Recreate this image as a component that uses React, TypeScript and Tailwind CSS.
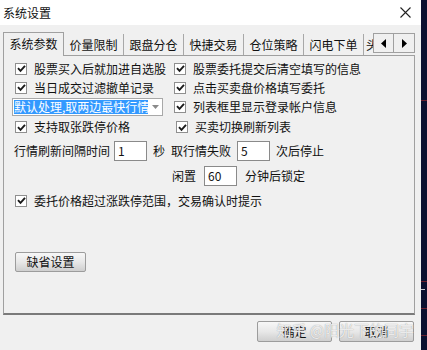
import React from 'react';

const font = { fontFamily: '"Noto Sans CJK SC", "Noto Sans", sans-serif' };

const Check = ({ className = '' }: { className?: string }) => (
    <span className={`w-[12px] h-[12px] border border-[#8f8f8f] bg-white flex items-center justify-center shrink-0 ${className}`}>
        <svg width="9" height="9" viewBox="0 0 9 9">
            <path d="M1 4.2 L3.5 6.8 L8 1.8" fill="none" stroke="#1a1a1a" strokeWidth="1.9" />
        </svg>
    </span>
);

const CheckRow = ({ label, className = '' }: { label: string; className?: string }) => (
    <div className={`flex items-center gap-[7px] h-[19px] ${className}`}>
        <Check />
        <span className="text-[12px] leading-none text-[#111] whitespace-nowrap">{label}</span>
    </div>
);

const Input = ({ value, className = '' }: { value: string; className?: string }) => (
    <div className={`h-[20px] w-[33px] bg-white border border-[#8a8a8a] flex items-center px-[3px] text-[12px] text-[#111] ${className}`}>
        {value}
    </div>
);

const Btn = ({ label, className = '' }: { label: string; className?: string }) => (
    <div className={`h-[20px] border border-[#9c9c9c] rounded-[2px] bg-gradient-to-b from-[#f7f7f7] via-[#e8e8e8] to-[#cfcfcf] flex items-center justify-center text-[12px] text-[#111] ${className}`}>
        {label}
    </div>
);

const tabs = ['系统参数', '价量限制', '跟盘分仓', '快捷交易', '仓位策略', '闪电下单'];

export default function App() {
    return (
        <div className="w-[427px] h-[350px] flex bg-[#f0f0f0] overflow-hidden" style={font}>
            <div className="w-[421px] flex flex-col">
                {/* title */}
                <div className="h-[25px] bg-white flex items-center justify-between pl-[3px] pr-[10px]">
                    <span className="text-[12px] text-[#111]">系统设置</span>
                    <svg width="11" height="11" viewBox="0 0 11 11">
                        <path d="M0.5 0.5 L10.5 10.5 M10.5 0.5 L0.5 10.5" stroke="#222" strokeWidth="1.1" />
                    </svg>
                </div>

                <div className="pl-[3px] pt-[6px]">
                    {/* tabs */}
                    <div className="h-[24px] flex items-end relative w-[412px]">
                        <div className="w-[61px] h-[24px] border-l border-t border-r border-[#a0a0a0] bg-[#f0f0f0] relative z-10 -mb-px flex items-center justify-center text-[12px] text-[#111] pb-[2px]">
                            {tabs[0]}
                        </div>
                        {tabs.slice(1).map((t) => (
                            <div key={t} className="w-[60px] h-[21px] border-r border-[#a8a8a8] flex items-center justify-center text-[12px] text-[#111]">
                                {t}
                            </div>
                        ))}
                        <div className="w-[9px] h-[21px] overflow-hidden flex items-center text-[12px] text-[#111]">
                            <span className="pl-[2px]">头</span>
                        </div>
                        <div className="absolute right-0 bottom-[2px] flex">
                            <div className="w-[21px] h-[20px] border border-[#a0a0a0] bg-[#f0f0f0] flex items-center justify-center">
                                <svg width="5" height="9" viewBox="0 0 5 9"><path d="M5 0 L0 4.5 L5 9 Z" fill="#000" /></svg>
                            </div>
                            <div className="w-[21px] h-[20px] border border-l-0 border-[#a0a0a0] bg-[#f0f0f0] flex items-center justify-center">
                                <svg width="5" height="9" viewBox="0 0 5 9"><path d="M0 0 L5 4.5 L0 9 Z" fill="#000" /></svg>
                            </div>
                        </div>
                    </div>

                    {/* panel */}
                    <div className="w-[412px] h-[260px] border border-[#a0a0a0] border-b-[#7a7a7a] border-b-2 pt-[3px] pl-[11px] flex flex-col">
                        <div className="flex">
                            <div className="w-[159px] flex flex-col">
                                <CheckRow label="股票买入后就加进自选股" />
                                <CheckRow label="当日成交过滤撤单记录" />
                                <div className="h-[19px] flex items-center -ml-[3px]">
                                    <div className="w-[151px] h-[18px] bg-white border border-[#a8a8a8] flex items-center pl-[1px]">
                                        <div className="w-[134px] h-[14px] bg-[#3399ff] text-white text-[12px] leading-none flex items-center overflow-hidden whitespace-nowrap">
                                            默认处理,取两边最快行情
                                        </div>
                                        <div className="flex-1 flex items-center justify-center">
                                            <svg width="7" height="4" viewBox="0 0 7 4"><path d="M0 0 L7 0 L3.5 4 Z" fill="#8a8a8a" /></svg>
                                        </div>
                                    </div>
                                </div>
                                <CheckRow label="支持取张跌停价格" className="mt-[1px] h-[20px]" />
                            </div>
                            <div className="flex flex-col">
                                <CheckRow label="股票委托提交后清空填写的信息" />
                                <CheckRow label="点击买卖盘价格填写委托" />
                                <CheckRow label="列表框里显示登录帐户信息" />
                                <CheckRow label="买卖切换刷新列表" className="mt-[1px] h-[20px] ml-[2px]" />
                            </div>
                        </div>

                        <div className="flex items-center h-[20px] mt-[4px] -ml-[1px] text-[12px] text-[#111]">
                            <span className="w-[100px] whitespace-nowrap">行情刷新间隔时间</span>
                            <Input value="1" />
                            <span className="ml-[6px] w-[18px]">秒</span>
                            <span className="w-[66px] whitespace-nowrap">取行情失败</span>
                            <Input value="5" />
                            <span className="ml-[6px]">次后停止</span>
                        </div>

                        <div className="flex items-center h-[20px] mt-[5px] pl-[157px] text-[12px] text-[#111]">
                            <span className="w-[32px]">闲置</span>
                            <Input value="60" />
                            <span className="ml-[8px]">分钟后锁定</span>
                        </div>

                        <CheckRow label="委托价格超过涨跌停范围，交易确认时提示" className="mt-[5px]" />

                        <Btn label="缺省设置" className="w-[71px] mt-[42px]" />
                    </div>

                    {/* bottom buttons */}
                    <div className="flex justify-end gap-[7px] pr-[7px] mt-[6px] relative">
                        <Btn label="确定" className="w-[75px] h-[21px]" />
                        <Btn label="取消" className="w-[75px] h-[21px]" />
                        <span className="absolute right-[7px] top-[1px] text-[15px] leading-none text-white/80 whitespace-nowrap [text-shadow:0_0_1px_#888]">
                            知乎 @阳光下的同宇
                        </span>
                    </div>
                </div>
            </div>
            <div className="w-[6px] bg-[#0c1030] flex flex-col">
                <div className="h-[100px]" />
                <div className="h-px bg-[#6a2030]" />
                <div className="h-[180px]" />
                <div className="h-px bg-[#6a2030]" />
                <div className="h-[7px]" />
                <div className="h-px bg-[#c8c8d0] w-[4px]" />
                <div className="h-[18px]" />
                <div className="h-px bg-[#6a2030]" />
                <div className="h-[26px]" />
                <div className="h-px bg-[#6a2030]" />
            </div>
        </div>
    );
}
